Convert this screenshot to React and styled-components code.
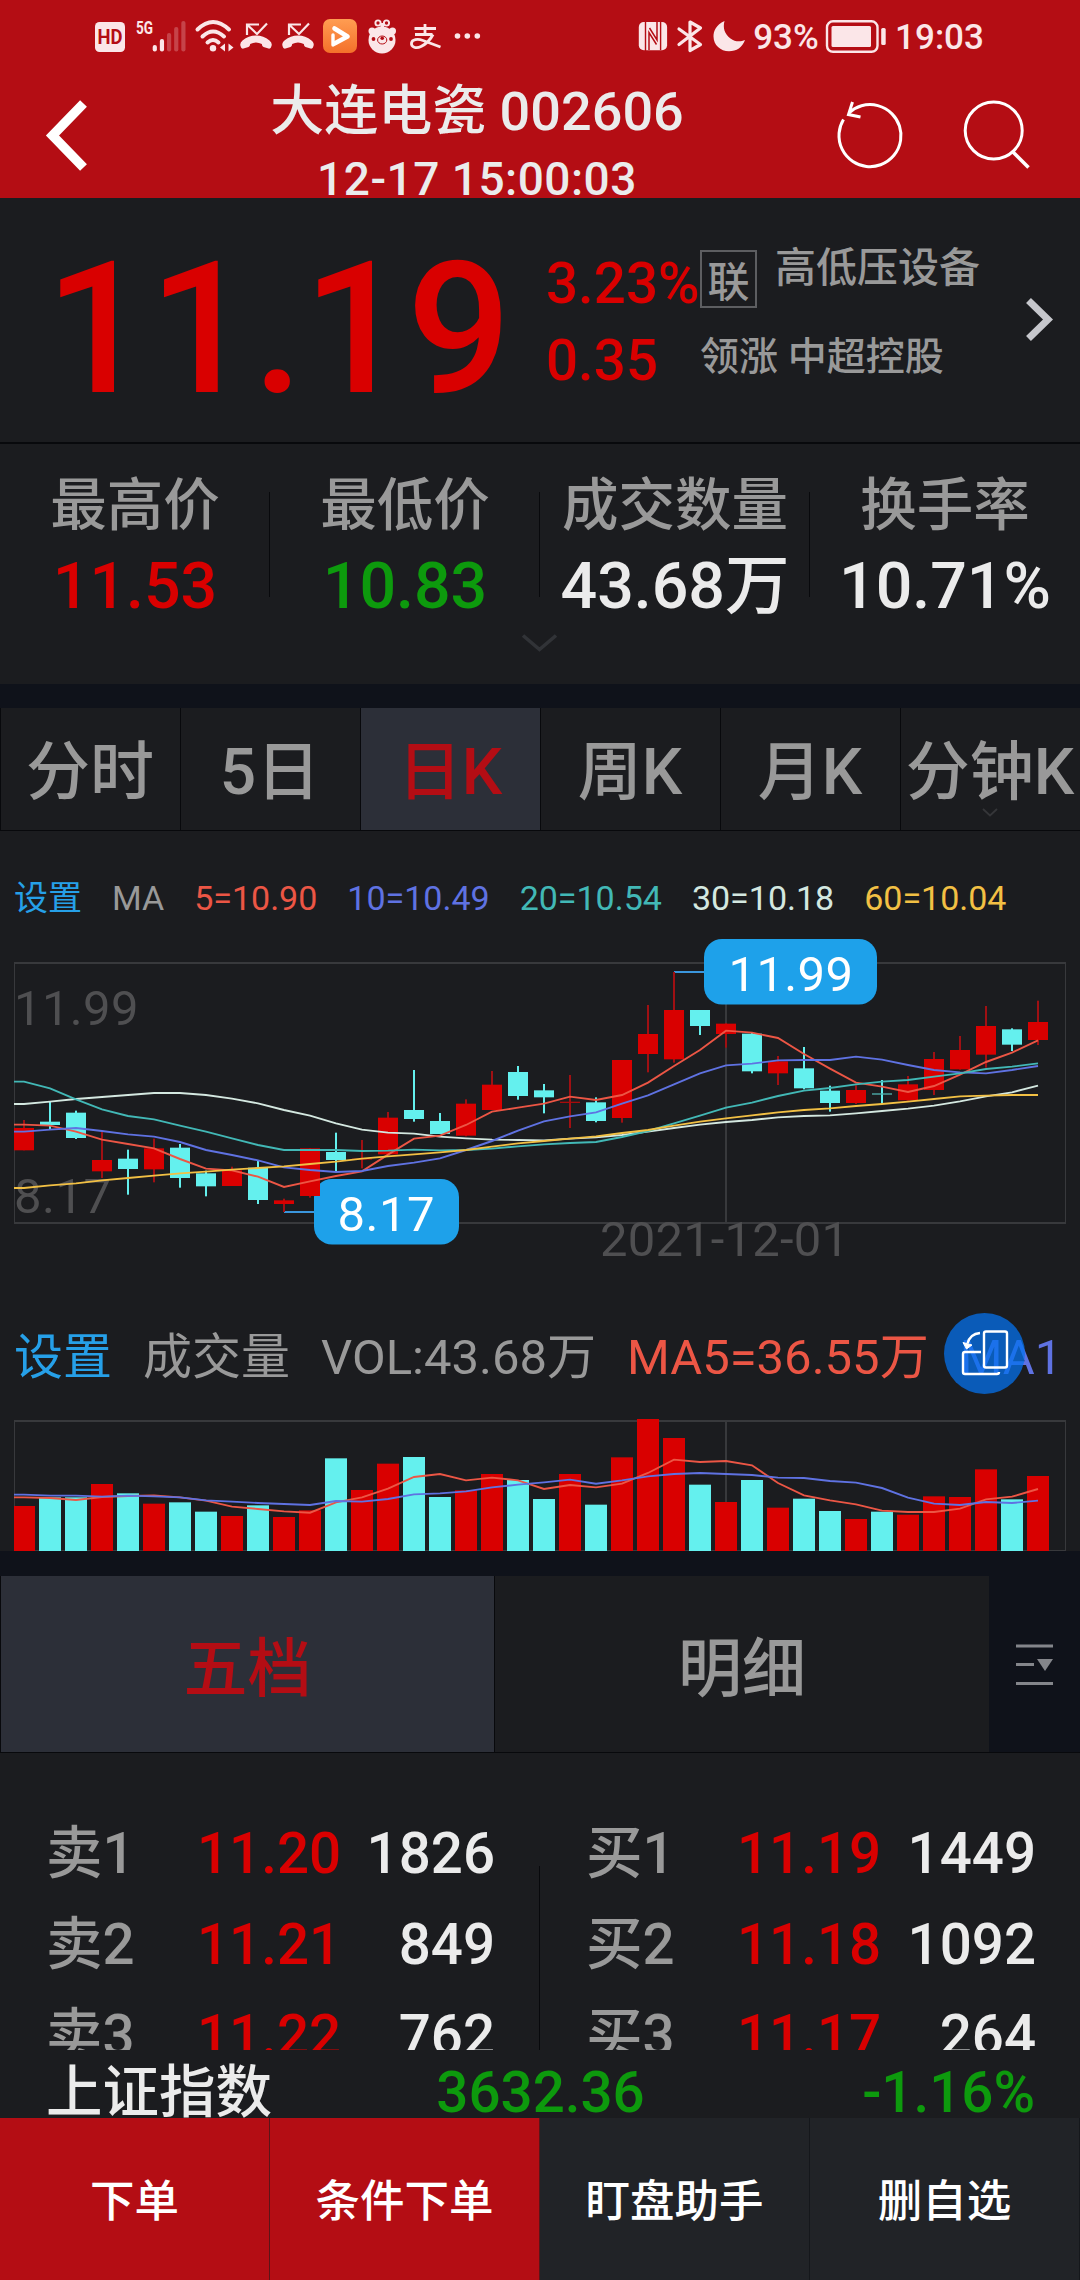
import React from "react";
import styled, { createGlobalStyle, css } from "styled-components";

const C = {
  red: "#d90000",
  brand: "#b40d14",
  green: "#0d9a0d",
  white: "#ebebeb",
  grey: "#999999",
  panel: "#1b1c1f",
  gap: "#0f121a",
  line: "#08090c",
  active: "#2c2f38",
  cyan: "#64f0ee",
  grid: "#38393c",
  axis: "#4f4f51",
  bubble: "#1ea1ea",
  ma5: "#ec5645",
  ma10: "#5f72e2",
  ma20: "#42b8b6",
  ma30: "#d4e8e0",
  ma60: "#f2c044",
  link: "#26a0e8",
};

const GlobalStyle = createGlobalStyle`
  * { box-sizing: border-box; }
  body {
    margin: 0;
    background: ${C.panel};
    font-family: Roboto, "Noto Sans CJK SC", sans-serif;
  }
  svg { display: block; flex: none; }
`;

const Screen = styled.main`
  width: 1080px;
  height: 2280px;
  overflow: hidden;
  display: flex;
  flex-direction: column;
  background: ${C.panel};
`;

const Header = styled.header`
  height: 198px;
  flex: none;
  background: ${C.brand};
  color: ${C.white};
`;

const StatusBar = styled.div`
  height: 74px;
  padding: 0 91px 0 84px;
  display: flex;
  color: #fbe6e8;
`;

const Spacer = styled.div`
  flex: 1;
`;

const StatusText = styled.span`
  width: ${(p) => p.$w}px;
  text-align: center;
  font-size: 35px;
  font-weight: 500;
  line-height: 75px;
`;

const NavBar = styled.div`
  height: 124px;
  display: grid;
  grid-template-columns: 122px 710px 124px 124px;
`;

const TitleBlock = styled.div`
  padding-top: 8px;
  display: flex;
  flex-direction: column;
  align-items: center;
  gap: 18px;
  white-space: nowrap;
  font-weight: 500;
`;

const Title = styled.h1`
  margin: 0;
  font-size: 54px;
  line-height: 60px;
  font-weight: 500;
`;

const Timestamp = styled.div`
  font-size: 46px;
  letter-spacing: 0.5px;
  line-height: 38px;
`;

const Quote = styled.section`
  height: 246px;
  flex: none;
  border-bottom: 2px solid ${C.line};
  display: grid;
  grid-template-columns: 546px 154px 316px 64px;
`;

const Price = styled.div`
  padding: 33px 0 0 45px;
  font-size: 184px;
  letter-spacing: -0.8px;
  line-height: 196px;
  font-weight: 500;
  color: ${C.red};
`;

const Change = styled.div`
  padding-top: 48px;
  font-size: 56.5px;
  line-height: 77px;
  font-weight: 500;
  color: ${C.red};
  white-space: nowrap;
`;

const Sector = styled.div`
  padding-top: 50px;
  color: ${C.grey};
  white-space: nowrap;
  font-weight: 500;
`;

const SectorTop = styled.div`
  display: flex;
  gap: 18px;
  font-size: 41px;
  line-height: 41px;
`;

const Tag = styled.span`
  margin-top: 2px;
  width: 57px;
  height: 58px;
  padding-top: 3px;
  border: 2px solid #5d5e61;
  text-align: center;
  font-size: 42px;
  line-height: 55px;
`;

const Leader = styled.div`
  margin-top: 24px;
  font-size: 39px;
  line-height: 50px;
`;

const Stats = styled.section`
  height: 240px;
  flex: none;
  padding-top: 27px;
`;

const StatGrid = styled.div`
  display: grid;
  grid-template-columns: repeat(4, 1fr);
  text-align: center;
  white-space: nowrap;
  font-weight: 500;
`;

const Stat = styled.div`
  background: linear-gradient(${C.line}, ${C.line}) right 21px / 1px 105px no-repeat;
  &:last-child { background: none; }
`;

const StatLabel = styled.div`
  font-size: 56.5px;
  line-height: 70px;
  color: ${C.grey};
`;

const StatValue = styled.div`
  margin-top: 5px;
  font-size: 64.5px;
  line-height: 80px;
  color: ${(p) => p.$color};
`;

const Expand = styled.svg`
  margin: 5px auto 0;
`;

const Gap = styled.div`
  height: ${(p) => p.$h}px;
  flex: none;
  background: ${C.gap};
`;

const tabBase = css`
  border-left: 1px solid ${C.line};
  text-align: center;
  white-space: nowrap;
  font-weight: 500;
  color: ${(p) => (p.$active ? C.brand : C.grey)};
  background: ${(p) => (p.$active ? C.active : C.panel)};
`;

const Periods = styled.nav`
  height: 123px;
  flex: none;
  display: grid;
  grid-template-columns: repeat(6, 180px);
  border-bottom: 1px solid ${C.line};
`;

const PeriodTab = styled.div`
  ${tabBase}
  display: flex;
  flex-direction: column;
  align-items: center;
  padding: 30px 1px 0 0;
  font-size: 64px;
  line-height: 70px;
`;

const Legend = styled.div`
  height: 101px;
  flex: none;
  padding: 36px 0 0 14px;
  display: flex;
  gap: 30px;
  font-size: 34px;
  line-height: 62px;
  white-space: nowrap;
`;

const Ink = styled.span`
  color: ${(p) => p.$color};
`;

const VolumeLegend = styled.div`
  position: relative;
  height: 120px;
  flex: none;
  padding: 28px 0 0 14px;
  display: flex;
  gap: 31px;
  font-size: 49px;
  line-height: 80px;
  white-space: nowrap;
`;

const RotateButton = styled.div`
  position: absolute;
  left: 944px;
  top: 23px;
  width: 81px;
  height: 81px;
  border-radius: 50%;
  background: rgba(4, 114, 237, 0.74);
`;

const BookTabs = styled.nav`
  height: 177px;
  flex: none;
  display: grid;
  grid-template-columns: 494px 495px 91px;
  background: ${C.gap};
  border-bottom: 1px solid ${C.line};
`;

const BookTab = styled.div`
  ${tabBase}
  padding-top: 12px;
  line-height: 164px;
  font-size: 64px;
`;

const Book = styled.section`
  height: 297px;
  flex: none;
  overflow: hidden;
  display: grid;
  grid-template-columns: 539px 1px 540px;
`;

const BookSide = styled.div`
  padding: 56px 44px 0 46px;
`;

const BookDivider = styled.div`
  margin-top: 113px;
  background: ${C.line};
`;

const BookRow = styled.div`
  display: grid;
  grid-template-columns: 151px 1fr auto;
  font-size: 56.5px;
  line-height: 91px;
  font-weight: 500;
  color: ${C.grey};
`;

const IndexBar = styled.section`
  height: 68px;
  flex: none;
  padding: 9px 45px 0 46px;
  display: grid;
  grid-template-columns: 300px 1fr 300px;
  font-size: 56.5px;
  line-height: 68px;
  font-weight: 500;
  white-space: nowrap;
  text-align: center;
  & > :first-child { text-align: left; }
  & > :last-child { text-align: right; }
`;

const Actions = styled.footer`
  height: 162px;
  flex: none;
  display: grid;
  grid-template-columns: repeat(4, 1fr);
`;

const Action = styled.div`
  padding-top: 6px;
  border-right: 1px solid ${(p) => (p.$primary ? "#5c1418" : "#15171b")};
  background: ${(p) => (p.$primary ? C.brand : "#212327")};
  color: #fff;
  text-align: center;
  font-size: 44.5px;
  font-weight: 500;
  line-height: 156px;
`;

/* Status bar drawings share one coordinate system: the bar itself. */
const StatusIcon = ({ x, w, children }) => (
  <svg width={w} height="74" viewBox={`${x} 0 ${w} 74`} fill="none">
    {children}
  </svg>
);

const TINT = "#fbe6e8";

const MissedCall = ({ x }) => (
  <StatusIcon x={x} w={x === 236 ? 41 : 42}>
    <g transform={`translate(${x === 236 ? 0 : 42} 0)`} stroke={TINT}>
      <path d="M247 35V24.500H259M247.500 25l9.500 9 10-10.500" strokeWidth="2.200" />
      <path
        d="M240.500 46q-1-3 2-5.500q6-5 13.500-5t13.500 5q3 2.500 2 5.500-.7 3.200-3 2.600l-5-1.500q-1.500-.6-1.700-3-2.800-1.600-5.800-1.600t-5.800 1.600q-.2 2.400-1.700 3l-5 1.500q-2.300.6-3-2.600z"
        fill={TINT}
        stroke="none"
      />
    </g>
  </StatusIcon>
);

const StatusIcons = () => (
  <>
    <StatusIcon x={84} w={47}>
      <rect x="95" y="22" width="30" height="30" rx="4.500" fill={TINT} />
      <text x="110" y="44" fontSize="19.500" fontWeight="700" textAnchor="middle" fill={C.brand} textLength="25" lengthAdjust="spacingAndGlyphs">HD</text>
    </StatusIcon>
    <StatusIcon x={131} w={59}>
      <text x="136" y="34" fontSize="19" fontWeight="700" fill={TINT} textLength="17" lengthAdjust="spacingAndGlyphs">5G</text>
      {[45, 39, 33, 27, 21].map((top, i) => (
        <rect key={top} x={152.7 + i * 7.150} y={top} width="4.200" height={51.500 - top} rx="2" fill={TINT} opacity={i < 2 ? 1 : 0.25} />
      ))}
    </StatusIcon>
    <StatusIcon x={190} w={46}>
      <g stroke={TINT} strokeWidth="4" strokeLinecap="round">
        <path d="M197.500 29.500q15.500-15 31.500 0M202.500 36.500q10.500-10 21.500 0M207.500 42.500q5.500-5 11 0" />
      </g>
      <circle cx="213" cy="48.300" r="3.200" fill={TINT} />
      <path d="M220 47.500l5-4v8zM233.500 47.500l-5-4v8z" fill={TINT} />
    </StatusIcon>
    <MissedCall x={236} />
    <MissedCall x={277} />
    <StatusIcon x={319} w={43}>
      <defs>
        <linearGradient id="play" x1="0" y1="0" x2="0" y2="1">
          <stop offset="0" stopColor="#ff9d52" />
          <stop offset="1" stopColor="#f4702a" />
        </linearGradient>
      </defs>
      <rect x="323" y="19" width="34" height="34" rx="7" fill="url(#play)" />
      <path d="M334.500 28.500L347.500 36.500 334.500 43.500" stroke="#fff" strokeWidth="4.600" strokeLinejoin="round" strokeLinecap="round" />
      <path d="M333 35v10" stroke="#fff" strokeWidth="3.400" strokeLinecap="round" />
    </StatusIcon>
    <StatusIcon x={362} w={41}>
      <g fill={TINT}>
        <circle cx="382" cy="40" r="13.500" />
        <circle cx="372" cy="31" r="3.500" />
        <circle cx="392.500" cy="31" r="3.500" />
        <rect x="380.500" y="23" width="3.500" height="6" />
      </g>
      <circle cx="378" cy="23" r="2.600" stroke={TINT} strokeWidth="1.900" />
      <circle cx="386.500" cy="23" r="2.600" stroke={TINT} strokeWidth="1.900" />
      <ellipse cx="382.200" cy="40" rx="4.600" ry="4" stroke={C.brand} strokeWidth="1" />
      <circle cx="382.200" cy="38.300" r="1.800" fill={C.brand} />
      <circle cx="373.500" cy="39" r="1.900" fill={C.brand} />
      <circle cx="391" cy="39" r="1.900" fill={C.brand} />
    </StatusIcon>
    <StatusIcon x={403} w={44}>
      <g stroke={TINT} strokeWidth="2.800">
        <path d="M425 24v9M414.500 28.500h21.500M415 34.500h17.500" />
        <path d="M433 34.500q-4 8-12 12c-5 2.500-10 .5-9.500-3.500.5-3.500 6-4.500 11.500-2.500l17.500 6.500" />
      </g>
    </StatusIcon>
    <StatusIcon x={447} w={43}>
      {[457.500, 467.300, 477.300].map((cx) => (
        <circle key={cx} cx={cx} cy="36" r="2.800" fill={TINT} />
      ))}
    </StatusIcon>
    <Spacer />
    <StatusIcon x={633} w={39}>
      <rect x="638.800" y="22" width="28.300" height="28.300" rx="5" fill={TINT} />
      <path d="M645.500 22V51M660.600 22V50" stroke={C.brand} strokeWidth="1.400" />
      <path d="M649 50V32.500L656.500 44.500M657 22V40L649.500 28" stroke={C.brand} strokeWidth="1.500" />
    </StatusIcon>
    <StatusIcon x={672} w={36}>
      <path d="M679 29l21.500 15.500-10.500 6V22l10.500 6L679 44.500" stroke={TINT} strokeWidth="3.200" strokeLinejoin="round" strokeLinecap="round" />
    </StatusIcon>
    <StatusIcon x={708} w={42}>
      <path d="M724.500 21C716 25 713.500 31 713.500 36.500c0 8.500 7 14.800 15.500 14.800 7.500 0 13.500-4 16-11.300-4.500 2-10 2-14.500-1.500-6-4.500-7.800-10.500-6-17.500z" fill={TINT} />
    </StatusIcon>
    <StatusText $w={72}>93%</StatusText>
    <StatusIcon x={822} w={68}>
      <rect x="827" y="21.300" width="50.500" height="30.500" rx="6" stroke={TINT} strokeWidth="2.400" />
      <rect x="831.500" y="26" width="39.500" height="21" rx="1.500" fill={TINT} />
      <rect x="881.200" y="28" width="4.500" height="17" rx="1.500" fill={TINT} />
    </StatusIcon>
    <StatusText $w={99}>19:03</StatusText>
  </>
);

/* Each candle: [rising, high, bodyTop, bodyBottom, low] in third-pixels below y=930. */
const CANDLES = [
  [1, 570, 594, 661, 661], [0, 515, 575, 585, 599], [0, 542, 548, 624, 627], [1, 605, 690, 724, 744],
  [0, 659, 686, 717, 794], [1, 626, 655, 718, 757], [0, 642, 653, 744, 773], [0, 722, 730, 769, 799],
  [1, 710, 721, 768, 768], [0, 693, 713, 810, 822], [1, 806, 811, 822, 846], [1, 655, 655, 798, 803],
  [0, 608, 666, 690, 725], [1, 630, 686, 689, 715], [1, 546, 563, 673, 673], [0, 420, 540, 567, 575],
  [0, 549, 573, 612, 612], [1, 508, 521, 617, 619], [1, 423, 464, 540, 540], [0, 408, 426, 498, 509],
  [0, 462, 481, 502, 550], [1, 435, 515, 519, 594], [0, 502, 517, 573, 577], [1, 390, 390, 564, 578],
  [1, 225, 312, 372, 427], [1, 126, 240, 388, 398], [0, 240, 240, 288, 315], [1, 280, 281, 312, 353],
  [0, 309, 311, 424, 430], [1, 378, 394, 430, 465], [0, 351, 415, 475, 478], [0, 467, 482, 519, 545],
  [1, 466, 480, 519, 522], [0, 450, 490, 494, 522], [1, 438, 463, 511, 512], [1, 366, 387, 480, 495],
  [1, 318, 360, 418, 419], [1, 228, 288, 374, 413], [0, 295, 298, 344, 363], [1, 212, 276, 330, 345],
];

const PRICE_MA = [
  [C.ma30, [522, 515, 507, 501, 495, 489, 489, 495, 506, 520, 540, 557, 580, 599, 608, 611, 620, 625, 629, 630, 631, 626, 622, 615, 605, 594, 584, 576, 570, 562, 558, 556, 550, 543, 536, 527, 514, 499, 487, 467]],
  [C.ma5, [584, 587, 605, 629, 642, 655, 687, 716, 721, 740, 771, 754, 738, 724, 674, 626, 617, 585, 545, 533, 521, 500, 510, 495, 458, 408, 360, 302, 308, 324, 372, 416, 458, 470, 486, 468, 434, 396, 368, 331]],
  [C.ma10, [605, 599, 594, 603, 613, 620, 636, 660, 675, 691, 712, 720, 726, 723, 708, 698, 685, 660, 633, 602, 574, 559, 547, 521, 496, 463, 430, 406, 401, 391, 390, 390, 380, 389, 405, 420, 427, 430, 420, 408]],
  [C.ma20, [455, 475, 508, 538, 558, 568, 587, 605, 625, 645, 660, 660, 660, 663, 662, 659, 661, 660, 656, 649, 643, 639, 636, 621, 603, 580, 557, 533, 518, 498, 482, 474, 463, 455, 450, 440, 430, 417, 410, 400]],
  [C.ma60, [774, 766, 760, 751, 744, 737, 730, 725, 719, 714, 709, 702, 695, 686, 679, 673, 667, 660, 650, 640, 633, 626, 619, 609, 600, 587, 575, 565, 556, 547, 540, 535, 528, 522, 515, 507, 499, 497, 495, 495]],
];

const VOLUMES = [
  648, 622, 622, 582, 610, 641, 637, 665, 678, 646, 681, 661, 505, 600, 521, 501, 621, 601, 552, 570,
  627, 552, 644, 502, 387, 444, 584, 636, 570, 653, 626, 663, 687, 665, 674, 619, 621, 538, 628, 558,
];

const VOLUME_MA = [
  [C.ma5, [622, 624, 630, 621, 618, 616, 622, 632, 650, 657, 664, 668, 637, 622, 596, 561, 552, 571, 563, 571, 597, 585, 592, 581, 549, 509, 516, 513, 526, 579, 616, 631, 643, 662, 666, 666, 656, 628, 620, 597]],
  [C.ma10, [614, 617, 617, 620, 617, 619, 622, 631, 635, 639, 642, 645, 633, 635, 627, 613, 610, 604, 592, 584, 577, 569, 581, 571, 559, 552, 549, 552, 555, 563, 564, 573, 578, 594, 623, 641, 645, 636, 639, 632]],
];

const cx = (i) => 24 + i * 26;

const Average = ({ color, values, base }) => (
  <polyline
    points={`14,${base + values[0] / 3} ` + values.map((v, i) => `${cx(i)},${base + v / 3}`).join(" ")}
    fill="none"
    stroke={color}
    strokeWidth="1.900"
  />
);

const PriceChart = () => (
  <svg width="1080" height="358" viewBox="0 932 1080 358">
    <g fill="none" stroke={C.grid} strokeWidth="2">
      <path d="M14 963H1066M14 1223H1066M726 963V1223" />
      <path d="M14.500 963V1223M1065.500 963V1223" strokeWidth="1" />
    </g>
    <g fill={C.axis} fontSize="49">
      <text x="14" y="1025" textLength="124.500">11.99</text>
      <text x="14" y="1213" textLength="97">8.17</text>
      <text x="600" y="1256" textLength="249">2021-12-01</text>
    </g>
    <path d="M674 972H706M284 1212H316" stroke="#3b96dc" strokeWidth="2" />
    <rect x="704" y="939" width="173" height="65.500" rx="18" fill={C.bubble} />
    <rect x="314" y="1179" width="145" height="65.500" rx="18" fill={C.bubble} />
    <g fill="#fff" fontSize="49">
      <text x="728.500" y="991" textLength="124.500">11.99</text>
      <text x="337.500" y="1231" textLength="97">8.17</text>
    </g>
    {CANDLES.map(([up, high, top, bottom, low], i) => {
      const flat = bottom - top < 5;
      const fill = up ? (flat ? "#a80b0b" : C.red) : flat ? "#4fb0ae" : C.cyan;
      return (
        <g key={i}>
          <rect x={cx(i) - 1} y={930 + high / 3} width="2" height={(low - high) / 3} fill={up ? "#a01013" : C.cyan} />
          <rect x={cx(i) - 10} y={930 + top / 3} width="20" height={(bottom - top) / 3} fill={fill} />
        </g>
      );
    })}
    {PRICE_MA.map(([color, values]) => (
      <Average key={color} color={color} values={values} base={930} />
    ))}
  </svg>
);

const VolumeChart = () => (
  <svg width="1080" height="141" viewBox="0 1410 1080 141">
    <g fill="none" stroke={C.grid}>
      <path d="M14 1421H1066M726 1421V1551" strokeWidth="2" />
      <path d="M14.500 1421V1551M1065.500 1421V1551M14 1550.500H1066" />
    </g>
    {VOLUMES.map((top, i) => {
      const left = Math.max(14, cx(i) - 11);
      const y = 1290 + top / 3;
      return <rect key={i} x={left} y={y} width={cx(i) + 11 - left} height={1551 - y} fill={CANDLES[i][0] ? C.red : C.cyan} />;
    })}
    {VOLUME_MA.map(([color, values]) => (
      <Average key={color} color={color} values={values} base={1290} />
    ))}
  </svg>
);

const PERIODS = ["分时", "5日", "日K", "周K", "月K", "分钟K"];

const STATS = [
  ["最高价", "11.53", C.red],
  ["最低价", "10.83", C.green],
  ["成交数量", "43.68万", C.white],
  ["换手率", "10.71%", C.white],
];

const ASKS = [["卖1", "11.20", "1826"], ["卖2", "11.21", "849"], ["卖3", "11.22", "762"]];
const BIDS = [["买1", "11.19", "1449"], ["买2", "11.18", "1092"], ["买3", "11.17", "264"]];

const Side = ({ rows }) => (
  <BookSide>
    {rows.map(([label, price, size]) => (
      <BookRow key={label}>
        <span>{label}</span>
        <Ink $color={C.red}>{price}</Ink>
        <Ink $color={C.white}>{size}</Ink>
      </BookRow>
    ))}
  </BookSide>
);

export default function App() {
  return (
    <>
      <GlobalStyle />
      <Screen>
        <Header>
          <StatusBar>
            <StatusIcons />
          </StatusBar>
          <NavBar>
            <svg width="122" height="124" viewBox="0 74 122 124" fill="none">
              <path d="M83.500 103.500L52.500 135.500 83.500 167.500" stroke="#fff" strokeWidth="9.500" />
            </svg>
            <TitleBlock>
              <Title>大连电瓷 002606</Title>
              <Timestamp>12-17 15:00:03</Timestamp>
            </TitleBlock>
            <svg width="124" height="124" viewBox="832 74 124 124" fill="none" stroke="#fff" strokeWidth="3">
              <path d="M843.500 119.500A31 31 0 1 0 849 112.800" />
              <path d="M852.500 102l-4 12.500 12 2.500" />
            </svg>
            <svg width="124" height="124" viewBox="956 74 124 124" fill="none" stroke="#fff" strokeWidth="3">
              <circle cx="993.700" cy="130.500" r="28.500" />
              <path d="M1012.500 151.500L1028.500 167.500" strokeWidth="3.600" />
            </svg>
          </NavBar>
        </Header>

        <Quote>
          <Price>11.19</Price>
          <Change>
            <div>3.23%</div>
            <div>0.35</div>
          </Change>
          <Sector>
            <SectorTop>
              <Tag>联</Tag>
              <span>高低压设备</span>
            </SectorTop>
            <Leader>领涨 中超控股</Leader>
          </Sector>
          <svg width="64" height="244" viewBox="1016 198 64 244" fill="none">
            <path d="M1028.500 300.500L1048 319.500 1028.500 338.500" stroke="#c6c7cc" strokeWidth="7" />
          </svg>
        </Quote>

        <Stats>
          <StatGrid>
            {STATS.map(([label, value, color]) => (
              <Stat key={label}>
                <StatLabel>{label}</StatLabel>
                <StatValue $color={color}>{value}</StatValue>
              </Stat>
            ))}
          </StatGrid>
          <Expand width="40" height="26" viewBox="520 631 40 26" fill="none">
            <path d="M523 635.500L539.500 649.500 556 635.500" stroke="#313337" strokeWidth="3.600" />
          </Expand>
        </Stats>

        <Gap $h={24} />

        <Periods>
          {PERIODS.map((name) => (
            <PeriodTab key={name} $active={name === "日K"}>
              {name}
              {name === "分钟K" && (
                <svg width="16" height="9" viewBox="0 0 16 9" fill="none">
                  <path d="M1 1L8 7.500 15 1" stroke="#353639" strokeWidth="1.800" />
                </svg>
              )}
            </PeriodTab>
          ))}
        </Periods>

        <Legend>
          <Ink $color={C.link}>设置</Ink>
          <Ink $color={C.grey}>MA</Ink>
          <Ink $color={C.ma5}>5=10.90</Ink>
          <Ink $color={C.ma10}>10=10.49</Ink>
          <Ink $color={C.ma20}>20=10.54</Ink>
          <Ink $color={C.ma30}>30=10.18</Ink>
          <Ink $color={C.ma60}>60=10.04</Ink>
        </Legend>
        <PriceChart />

        <VolumeLegend>
          <Ink $color={C.link}>设置</Ink>
          <Ink $color={C.grey}>成交量</Ink>
          <Ink $color={C.grey}>VOL:43.68万</Ink>
          <Ink $color={C.ma5}>MA5=36.55万</Ink>
          <Ink $color={C.ma10}>MA1</Ink>
          <RotateButton>
            <svg width="81" height="81" viewBox="944 1313 81 81" fill="none" stroke="#fff" strokeWidth="2.400">
              <rect x="984" y="1331.500" width="23" height="36" rx="2" />
              <path d="M981 1352H965q-2 0-2 2v18q0 2 2 2h32q2 0 2-2" />
              <path d="M980 1333q-10 1-12.500 10.500" />
              <path d="M963 1342.500l9 2.500-5.500 4z" fill="#fff" strokeWidth="1" />
            </svg>
          </RotateButton>
        </VolumeLegend>
        <VolumeChart />

        <Gap $h={25} />

        <BookTabs>
          <BookTab $active>五档</BookTab>
          <BookTab>明细</BookTab>
          <svg width="91" height="176" viewBox="989 1576 91 176" fill="none" stroke="#84868b" strokeWidth="3">
            <path d="M1016 1646H1053M1016 1664.500H1034M1016 1683.500H1053" />
            <path d="M1037 1659H1053L1045 1671z" fill="#84868b" stroke="none" />
          </svg>
        </BookTabs>

        <Book>
          <Side rows={ASKS} />
          <BookDivider />
          <Side rows={BIDS} />
        </Book>

        <IndexBar>
          <Ink $color={C.white}>上证指数</Ink>
          <Ink $color={C.green}>3632.36</Ink>
          <Ink $color={C.green}>-1.16%</Ink>
        </IndexBar>

        <Actions>
          <Action $primary>下单</Action>
          <Action $primary>条件下单</Action>
          <Action>盯盘助手</Action>
          <Action>删自选</Action>
        </Actions>
      </Screen>
    </>
  );
}
